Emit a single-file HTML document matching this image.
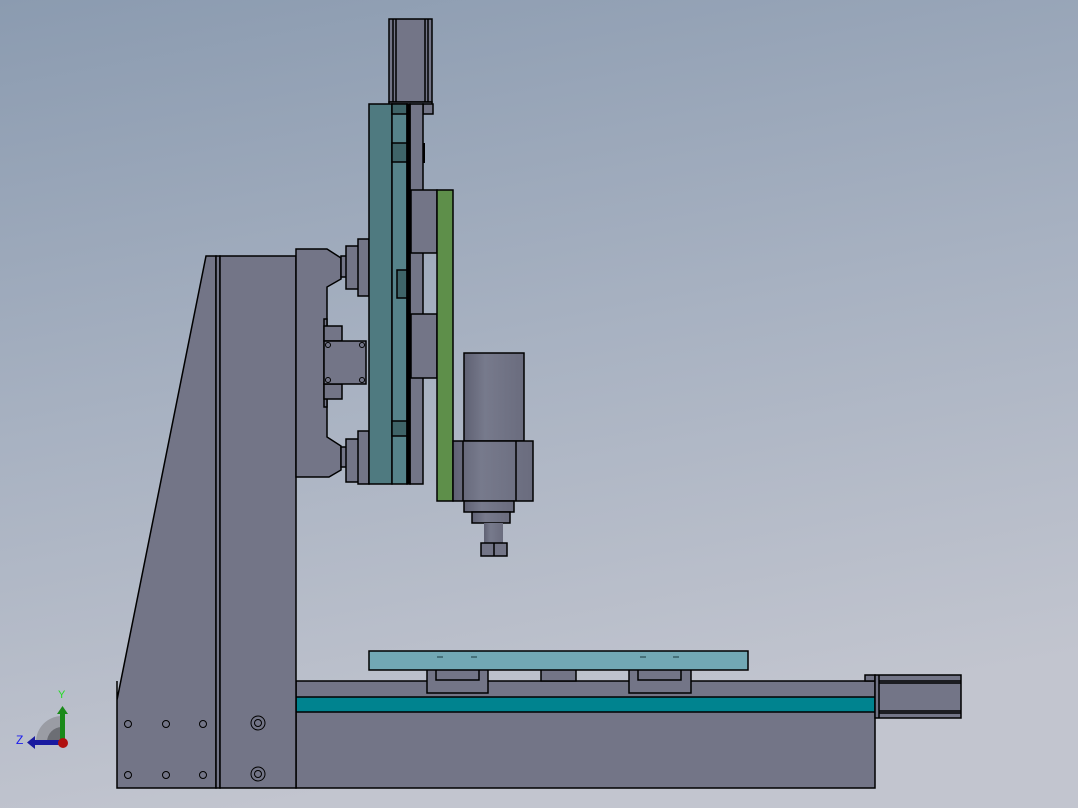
<!DOCTYPE html>
<html><head><meta charset="utf-8"><style>
html,body{margin:0;padding:0;width:1078px;height:808px;overflow:hidden}
svg{display:block}
</style></head><body>
<svg width="1078" height="808" viewBox="0 0 1078 808" xmlns="http://www.w3.org/2000/svg">
<defs>
<linearGradient id="bg" x1="0" y1="0" x2="0.25" y2="1">
<stop offset="0" stop-color="#8b9bb0"/><stop offset="0.5" stop-color="#a7b1c1"/><stop offset="1" stop-color="#c2c5cf"/>
</linearGradient>
<linearGradient id="cyl" x1="0" y1="0" x2="1" y2="0">
<stop offset="0" stop-color="#5f6173"/><stop offset="0.35" stop-color="#777a8c"/><stop offset="1" stop-color="#6a6c7e"/>
</linearGradient>
</defs>
<rect width="1078" height="808" fill="url(#bg)"/>
<g stroke="#000" stroke-width="1.5" fill="#737587">
<!-- base -->
<rect x="296" y="681" width="579" height="107"/>
<rect x="296" y="697" width="579" height="15" fill="#00838f"/>
<!-- X motor -->
<rect x="865" y="675" width="10" height="6"/>
<rect x="875" y="675" width="86" height="43"/>
<line x1="879" y1="675" x2="879" y2="718"/>
<line x1="879" y1="681" x2="961" y2="681"/><line x1="879" y1="683" x2="961" y2="683"/>
<line x1="879" y1="711" x2="961" y2="711"/><line x1="879" y1="713" x2="961" y2="713"/>
<!-- carriages -->
<rect x="427" y="668" width="61" height="25"/><rect x="436" y="668" width="43" height="12"/>
<rect x="541" y="668" width="35" height="13"/>
<rect x="629" y="668" width="62" height="25"/><rect x="638" y="668" width="43" height="12"/>
<!-- table -->
<rect x="369" y="651" width="379" height="19" fill="#72a8b4"/>
<g stroke="#1a3a40" stroke-width="1"><line x1="437" y1="657" x2="443" y2="657"/><line x1="471" y1="657" x2="477" y2="657"/><line x1="640" y1="657" x2="646" y2="657"/><line x1="673" y1="657" x2="679" y2="657"/></g>
<!-- column -->
<polygon points="117,681 117,788 216,788 216,256 206,256 117,700"/>
<rect x="216" y="256" width="4" height="532"/>
<rect x="220" y="256" width="76" height="532"/>
<!-- holes -->
<g fill="none" stroke-width="1">
<circle cx="128" cy="724" r="3.5"/><circle cx="166" cy="724" r="3.5"/><circle cx="203" cy="724" r="3.5"/>
<circle cx="128" cy="775" r="3.5"/><circle cx="166" cy="775" r="3.5"/><circle cx="203" cy="775" r="3.5"/>
<circle cx="258" cy="723" r="7"/><circle cx="258" cy="723" r="3.5"/>
<circle cx="258" cy="774" r="7"/><circle cx="258" cy="774" r="3.5"/>
</g>
<!-- Y bracket -->
<polygon points="296,249 327,249 341,258 341,279 327,287 327,437 341,446 341,470 329,477 296,477"/>
<rect x="324" y="319" width="3" height="88"/>
<rect x="341" y="256" width="17" height="21"/>
<rect x="346" y="246" width="23" height="43"/><rect x="358" y="239" width="11" height="57"/>
<rect x="341" y="447" width="17" height="20"/>
<rect x="346" y="439" width="23" height="43"/><rect x="358" y="431" width="11" height="53"/>
<rect x="324" y="326" width="18" height="15"/><rect x="324" y="384" width="18" height="15"/>
<rect x="324" y="341" width="42" height="43"/>
<g fill="none" stroke-width="1"><circle cx="328" cy="345" r="2.5"/><circle cx="362" cy="345" r="2.5"/><circle cx="328" cy="380" r="2.5"/><circle cx="362" cy="380" r="2.5"/></g>
<!-- Z motor -->
<rect x="389" y="19" width="43" height="83"/>
<line x1="393" y1="19" x2="393" y2="102"/><line x1="396" y1="19" x2="396" y2="102"/>
<line x1="425" y1="19" x2="425" y2="102"/><line x1="428" y1="19" x2="428" y2="102"/>
<rect x="389" y="102" width="43" height="3"/>
<rect x="423" y="104" width="10" height="10"/>
<!-- Z rail -->
<rect x="410" y="104" width="13" height="380"/>
<line x1="424" y1="143" x2="424" y2="163" stroke-width="2"/>
<!-- teal plates -->
<rect x="369" y="104" width="23" height="380" fill="#4f7a80"/>
<rect x="392" y="104" width="15" height="380" fill="#56838a"/>
<rect x="392" y="104" width="15" height="10" fill="#3f6468"/>
<rect x="392" y="143" width="15" height="19" fill="#3f6468"/>
<rect x="392" y="421" width="15" height="15" fill="#3f6468"/>
<rect x="397" y="270" width="10" height="28" fill="#3f6468"/>
<rect x="407" y="104" width="3" height="380" fill="#000"/>
<!-- Z carriage blocks -->
<rect x="411" y="190" width="26" height="63"/>
<rect x="411" y="314" width="26" height="64"/>
<rect x="437" y="190" width="16" height="311" fill="#5e8f4a"/>
<!-- spindle -->
<rect x="464" y="353" width="60" height="88" fill="url(#cyl)"/>
<rect x="453" y="441" width="80" height="60" fill="url(#cyl)"/>
<line x1="463" y1="441" x2="463" y2="501"/><line x1="516" y1="441" x2="516" y2="501"/>
<rect x="464" y="501" width="50" height="11" fill="url(#cyl)"/>
<rect x="472" y="512" width="38" height="11" fill="url(#cyl)"/>
<rect x="484" y="523" width="19" height="20" fill="url(#cyl)" stroke="none"/>
<rect x="481" y="543" width="26" height="13"/><line x1="494" y1="543" x2="494" y2="556"/>
</g>
<!-- triad -->
<path d="M36,742 A26,26 0 0 1 62,716 L62,742 Z" fill="#9a9ca4"/>
<path d="M47,742 A15,15 0 0 1 62,727 L62,742 Z" fill="#6c6e74"/>
<rect x="60" y="713" width="5" height="29" fill="#1a8a1a"/>
<polygon points="57,714 68,714 62.5,706" fill="#1a8a1a"/>
<rect x="34" y="740" width="28" height="5" fill="#1a1aa0"/>
<polygon points="35,736 35,749 27,742.5" fill="#1a1aa0"/>
<circle cx="63" cy="743" r="5" fill="#b01010"/>
<text x="58" y="698" font-family="Liberation Sans, sans-serif" font-size="11" fill="#22dd22">Y</text>
<text x="16" y="744" font-family="Liberation Sans, sans-serif" font-size="12" fill="#1a1aee">Z</text>
</svg>
</body></html>
